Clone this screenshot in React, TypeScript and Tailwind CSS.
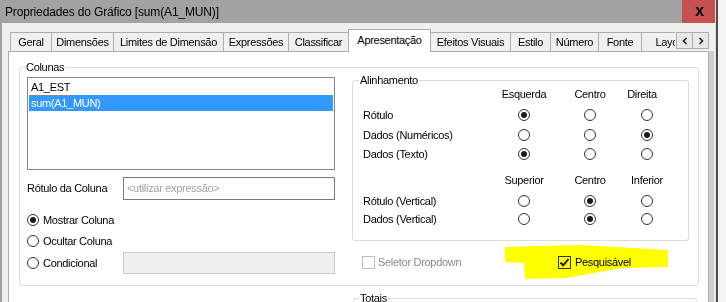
import React from 'react';

const tabs = [
  { label: 'Geral', w: 'w-[42px]' },
  { label: 'Dimensões', w: 'w-[63px]' },
  { label: 'Limites de Dimensão', w: 'w-[111px]' },
  { label: 'Expressões', w: 'w-[66px]' },
  { label: 'Classificar', w: 'w-[61px]' },
  { label: 'Apresentação', w: 'w-[83px]', active: true },
  { label: 'Efeitos Visuais', w: 'w-[81px]' },
  { label: 'Estilo', w: 'w-[41px]' },
  { label: 'Número', w: 'w-[49px]' },
  { label: 'Fonte', w: 'w-[44px]' },
  { label: 'Layout', w: 'w-[60px]' },
];

const Radio = ({ on }: { on?: boolean }) => (
  <span className="flex h-[12px] w-[12px] shrink-0 items-center justify-center rounded-full border border-[#333333] bg-white">
    {on && <span className="h-[6px] w-[6px] rounded-full bg-[#1b1b1b]" />}
  </span>
);

const AlignRow = ({ label, sel, h }: { label: string; sel: number; h: string }) => (
  <div className={`flex items-center ${h}`}>
    <span className="w-[132px]">{label}</span>
    <span className="flex w-[58px] justify-center">
      <Radio on={sel === 0} />
    </span>
    <span className="flex w-[74px] justify-center">
      <Radio on={sel === 1} />
    </span>
    <span className="flex w-[40px] justify-center">
      <Radio on={sel === 2} />
    </span>
  </div>
);

const AlignHead = ({ cols }: { cols: string[] }) => (
  <div className="flex h-[14px] items-center">
    <span className="w-[132px]" />
    <span className="w-[58px] text-center">{cols[0]}</span>
    <span className="w-[74px] text-center">{cols[1]}</span>
    <span className={`w-[40px] text-center ${cols[2] === 'Direita' ? 'pr-[10px]' : ''}`}>{cols[2]}</span>
  </div>
);

const Chevron = ({ dir }: { dir: 'l' | 'r' }) => (
  <svg width="6" height="8" viewBox="0 0 6 8">
    <path
      d={dir === 'l' ? 'M4.5 1 L1.5 4 L4.5 7' : 'M1.5 1 L4.5 4 L1.5 7'}
      fill="none"
      stroke="#222"
      strokeWidth="1.6"
    />
  </svg>
);

export default function App() {
  return (
    <div className="relative flex h-[302px] w-[726px] overflow-hidden bg-[#f4f4f4] font-['Liberation_Sans',Arial,sans-serif] text-[11px] tracking-[-0.3px] text-black">
      <div className="flex w-[715px] flex-col">
        {/* Title bar */}
        <div className="flex h-[23px] shrink-0 items-center justify-between bg-[#a2a2a2]">
          <span className="pl-[5px] text-[12px] tracking-[-0.15px]">Propriedades do Gráfico [sum(A1_MUN)]</span>
          <div className="flex h-[23px] w-[33px] items-center justify-center bg-[#c75050] pl-[2px] pb-[2px] text-[16px] font-bold leading-none">
            x
          </div>
        </div>

        {/* Body */}
        <div className="flex flex-1 flex-col border-l-2 border-[#a2a2a2] bg-[#f0f0f0] pl-[6px] pt-[6px]">
          {/* Tabs */}
          <div className="relative z-10 -mb-px flex h-[23px] items-end pl-[2px]">
            <div className="flex w-[665px] items-end overflow-hidden">
              {tabs.map((t, i) =>
                t.active ? (
                  <div
                    key={t.label}
                    className={`${t.w} relative z-10 -ml-px flex h-[23px] shrink-0 items-center justify-center border border-b-0 border-[#adadad] bg-white pb-[1px]`}
                  >
                    {t.label}
                  </div>
                ) : (
                  <div
                    key={t.label}
                    className={`${t.w} ${i === 0 ? '' : '-ml-px'} mb-[1px] flex h-[19px] shrink-0 items-center justify-center border border-b-0 border-[#adadad] bg-[#f0f0f0] pt-[1px]`}
                  >
                    {t.label}
                  </div>
                )
              )}
            </div>
            <div className="ml-[1px] flex self-start pt-[3px]">
              <div className="flex h-[17px] w-[17px] items-center justify-center border border-[#adadad] bg-[#e9e9e9]">
                <Chevron dir="l" />
              </div>
              <div className="-ml-px flex h-[17px] w-[17px] items-center justify-center border border-[#adadad] bg-[#e9e9e9]">
                <Chevron dir="r" />
              </div>
            </div>
          </div>

          {/* Tab panel */}
          <div className="flex w-[701px] flex-1 flex-col border border-[#adadad] bg-white shadow-[5px_0_0_0_#cdcdcd]">
            <fieldset className="ml-[10px] mt-[8px] w-[680px] rounded-[3px] border border-[#dcdcdc] pb-[11px] pl-[7px] pr-[9px]">
              <legend className="-ml-[2px] px-[1px] leading-[14px]">Colunas</legend>
              <div className="flex">
                {/* Left column */}
                <div className="flex w-[308px] flex-col">
                  <div className="mt-[3px] h-[93px] border border-[#828790] bg-white p-[1px]">
                    <div className="h-[16px] px-[2px]">
                      <span className="inline-block h-[16px] border-b border-dotted border-[#e0702a] leading-[15px]">
                        A1_EST
                      </span>
                    </div>
                    <div className="h-[16px] bg-[#3399ff] px-[2px] leading-[16px] text-white">sum(A1_MUN)</div>
                  </div>

                  <div className="mt-[7px] flex items-center">
                    <span className="w-[96px]">Rótulo da Coluna</span>
                    <div className="flex h-[23px] w-[212px] items-center border border-[#7a7a7a] bg-white pl-[3px] text-[#a3a3a3]">
                      &lt;utilizar expressão&gt;
                    </div>
                  </div>

                  <div className="mt-[12px] flex h-[16px] items-center gap-[4px]">
                    <Radio on />
                    <span>Mostrar Coluna</span>
                  </div>
                  <div className="mt-[5px] flex h-[16px] items-center gap-[4px]">
                    <Radio />
                    <span>Ocultar Coluna</span>
                  </div>
                  <div className="mt-[3px] flex h-[22px] items-center">
                    <div className="flex w-[96px] items-center gap-[4px]">
                      <Radio />
                      <span>Condicional</span>
                    </div>
                    <div className="h-[22px] w-[212px] border border-[#cccccc] bg-[#f0f0f0]" />
                  </div>
                </div>

                {/* Right column */}
                <div className="ml-[17px] flex w-[337px] flex-col">
                  <fieldset className="rounded-[3px] border border-[#dcdcdc] pb-[12px] pl-[10px]">
                    <legend className="-ml-[4px] px-[1px] leading-[13px]">Alinhamento</legend>
                    <AlignHead cols={['Esquerda', 'Centro', 'Direita']} />
                    <div className="mt-[4px]">
                      <AlignRow label="Rótulo" sel={0} h="h-[20px]" />
                      <AlignRow label="Dados (Numéricos)" sel={2} h="h-[20px]" />
                      <AlignRow label="Dados (Texto)" sel={0} h="h-[18px]" />
                    </div>
                    <div className="mt-[10px]">
                      <AlignHead cols={['Superior', 'Centro', 'Inferior']} />
                    </div>
                    <div className="mt-[5px]">
                      <AlignRow label="Rótulo (Vertical)" sel={1} h="h-[18px]" />
                      <AlignRow label="Dados (Vertical)" sel={1} h="h-[18px]" />
                    </div>
                  </fieldset>

                  <div className="ml-[10px] mt-[14px] flex h-[15px] items-center">
                    <div className="flex w-[196px] items-center gap-[3px]">
                      <span className="h-[13px] w-[13px] border border-[#bcbcbc] bg-white" />
                      <span className="text-[#8a8a8a]">Seletor Dropdown</span>
                    </div>
                    <div className="flex items-center gap-[4px]">
                      <span className="flex h-[13px] w-[13px] items-center justify-center border border-[#333333] bg-white">
                        <svg width="11" height="11" viewBox="0 0 11 11">
                          <path d="M1.5 5.5 L4.2 8.3 L9.5 2" fill="none" stroke="#111" strokeWidth="1.9" />
                        </svg>
                      </span>
                      <span>Pesquisável</span>
                    </div>
                  </div>
                </div>
              </div>
            </fieldset>

            <fieldset className="ml-[344px] mt-[6px] h-[60px] w-[344px] rounded-[3px] border border-[#dcdcdc]">
              <legend className="ml-[5px] px-[1px] leading-[13px]">Totais</legend>
            </fieldset>
          </div>
        </div>
      </div>

      {/* Window edge */}
      <div className="w-[1px] bg-[#dedede]" />
      <div className="w-[2px] bg-[#4d4d4d]" />

      {/* Yellow marker highlight */}
      <svg
        className="pointer-events-none absolute left-0 top-0 mix-blend-multiply"
        width="726"
        height="302"
        viewBox="0 0 726 302"
      >
        <polygon
          points="505,247 580,245 668,250 668,267 622,268 600,272 566,278 525,279 524,263 505,262"
          fill="#ffff00"
        />
      </svg>
    </div>
  );
}
